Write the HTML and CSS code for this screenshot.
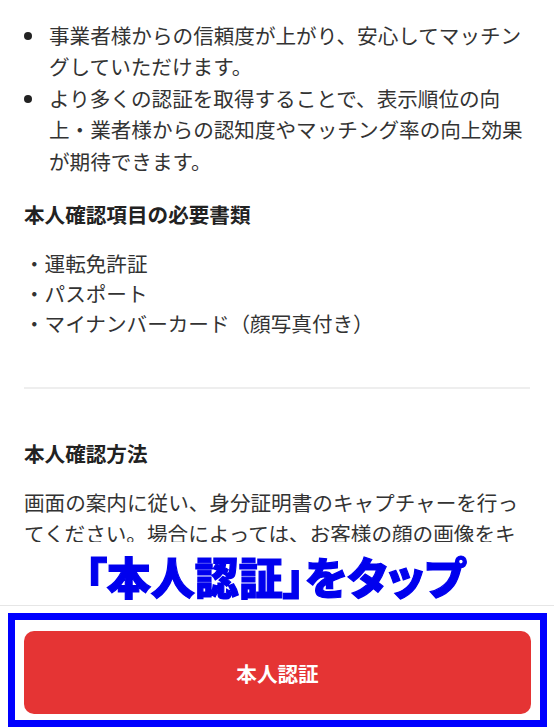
FILE: index.html
```html
<!DOCTYPE html>
<html lang="ja">
<head>
<meta charset="utf-8">
<title>本人確認</title>
<link rel="stylesheet" href="styles.css">
</head>
<body>
<main class="content">
  <ul class="bullets">
    <li>事業者様からの信頼度が上がり、安心してマッチングしていただけます。</li>
    <li>より多くの認証を取得することで、表示順位の向上・業者様からの認知度やマッチング率の向上効果が期待できます。</li>
  </ul>
  <h2 class="heading heading-docs">本人確認項目の必要書類</h2>
  <ul class="docs">
    <li>・運転免許証</li>
    <li>・パスポート</li>
    <li>・マイナンバーカード（顔写真付き）</li>
  </ul>
  <hr class="divider">
  <h2 class="heading heading-method">本人確認方法</h2>
  <p class="para">画面の案内に従い、身分証明書のキャプチャーを行ってください。場合によっては、お客様の顔の画像をキ</p>
</main>

<div class="callout"><span class="callout-text">「本人認証」をタップ</span></div>

<footer class="footer">
  <button class="cta" type="button">本人認証</button>
</footer>
<div class="highlight"></div>
</body>
</html>
```
FILE: styles.css
```css
html, body {
  margin: 0;
  padding: 0;
  background: #ffffff;
}
body {
  font-family: "Noto Sans CJK JP", "Noto Sans", sans-serif;
  font-size: 20.6px;
  line-height: 31.4px;
  color: #333333;
  overflow: hidden;
  height: 728px;
}
.content {
  padding: 20px 24px 0;
}
.bullets {
  list-style: none;
  margin: 0;
  padding: 0;
}
.bullets li {
  position: relative;
  padding-left: 25px;
}
.bullets li::before {
  content: "";
  position: absolute;
  left: 0;
  top: 12px;
  width: 8px;
  height: 8px;
  border-radius: 50%;
  background: #222222;
}
.heading {
  margin: 0;
  font-size: 20.6px;
  line-height: 31.4px;
  font-weight: 700;
  color: #222222;
}
.heading-docs {
  margin-top: 21.5px;
}
.docs {
  list-style: none;
  margin: 18px 0 0;
  padding: 0;
  line-height: 30px;
}
.divider {
  border: 0;
  height: 2px;
  background: #eeeeee;
  margin: 49px 0 0;
}
.heading-method {
  margin-top: 48.6px;
}
.para {
  margin: 18px 0 0;
}
.callout {
  position: fixed;
  left: 0;
  right: 0;
  top: 542px;
  height: 62px;
  background: #ffffff;
  display: flex;
  justify-content: center;
  align-items: center;
  z-index: 3;
}
.callout-text {
  font-size: 44px;
  line-height: 1;
  font-weight: 900;
  color: #0000ee;
  font-feature-settings: "palt";
  -webkit-text-stroke: 1.2px #0000ee;
  text-shadow:
    3px 0 0 #fff, -3px 0 0 #fff, 0 3px 0 #fff, 0 -3px 0 #fff,
    2px 2px 0 #fff, -2px 2px 0 #fff, 2px -2px 0 #fff, -2px -2px 0 #fff;
  transform: translate(-2px, 3px);
}
.footer {
  position: fixed;
  left: 0;
  right: 0;
  bottom: 0;
  height: 123px;
  border-top: 1px solid #e6e6e6;
  background: #ffffff;
  padding: 25px 23px 0 24px;
  box-sizing: border-box;
  z-index: 2;
}
.cta {
  display: block;
  width: 100%;
  height: 83px;
  border: 0;
  border-radius: 10px;
  background: #e53434;
  color: #ffffff;
  font-family: "Noto Sans CJK JP", sans-serif;
  font-size: 20.6px;
  font-weight: 700;
}
.highlight {
  position: fixed;
  left: 8px;
  top: 613px;
  width: 539px;
  height: 114px;
  box-sizing: border-box;
  border: 7px solid #0000ff;
  z-index: 4;
  pointer-events: none;
}
```
